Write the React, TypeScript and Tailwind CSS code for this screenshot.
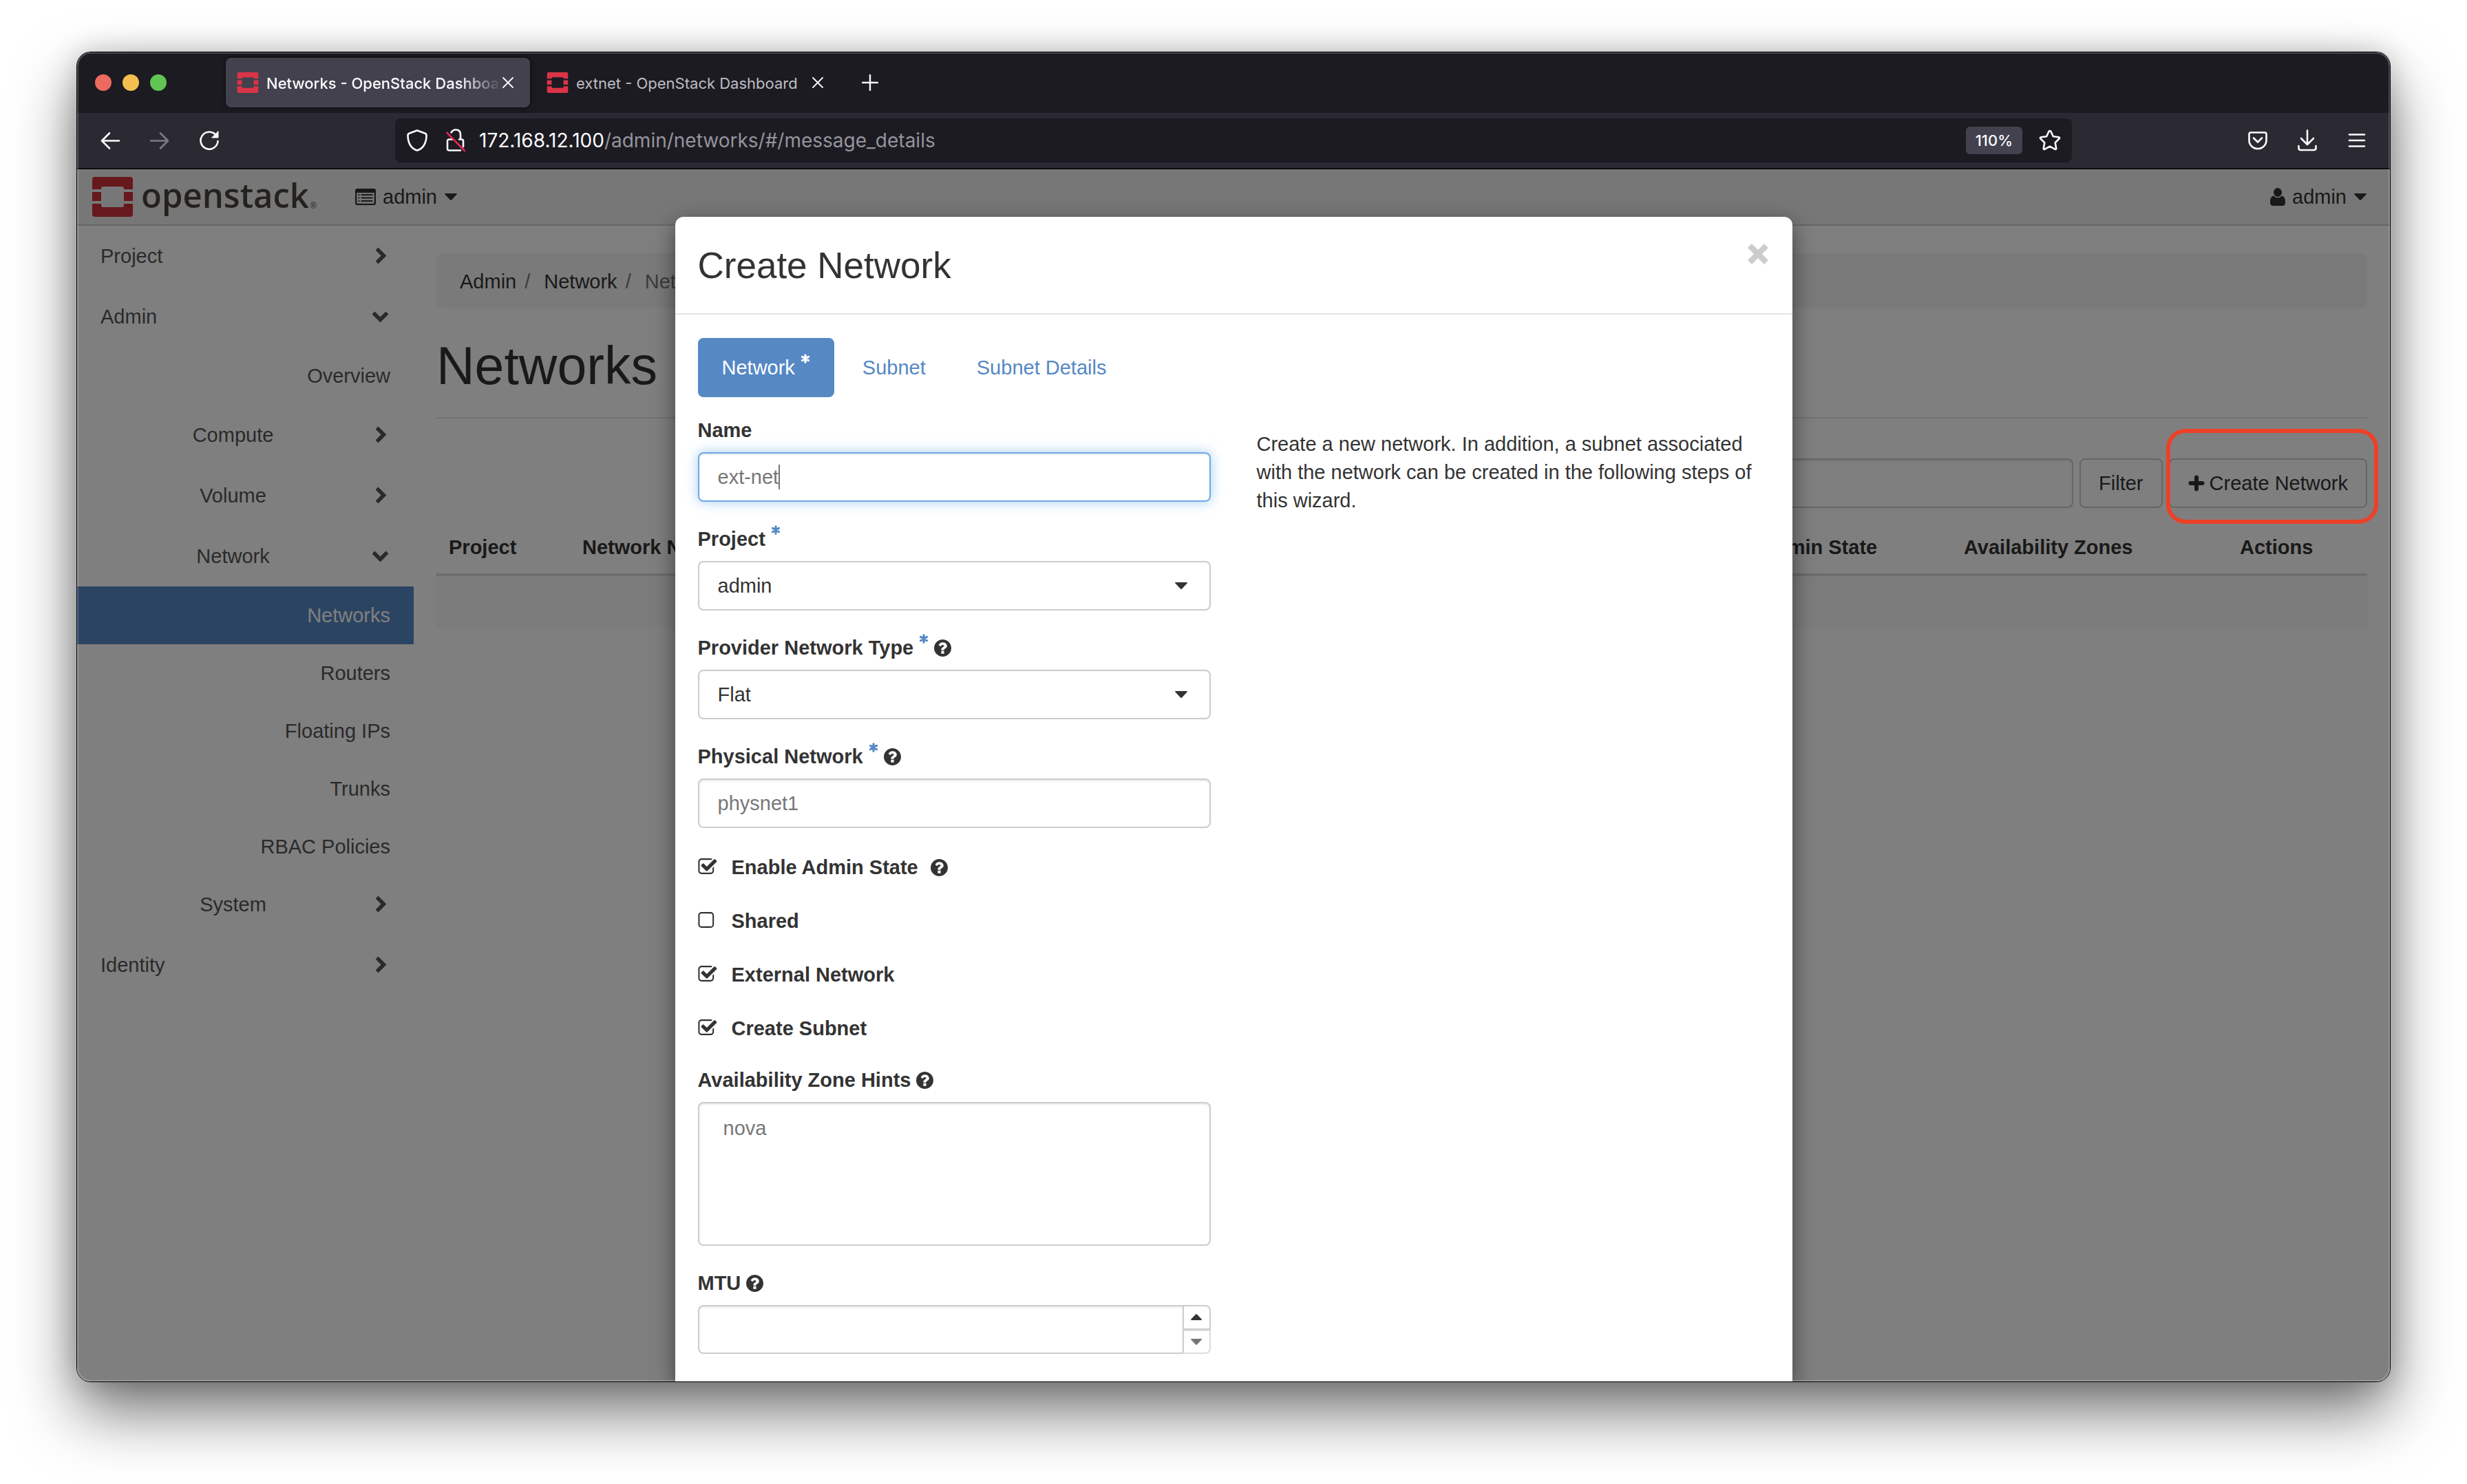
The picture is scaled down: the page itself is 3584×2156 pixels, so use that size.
import React from "react";

const questionPath =
  "M1024 1376v-192q0-14-9-23t-23-9h-192q-14 0-23 9t-9 23v192q0 14 9 23t23 9h192q14 0 23-9t9-23zm256-672q0-88-55.5-163t-138.5-116-170-41q-243 0-371 213-15 24 8 42l132 100q7 6 19 6 16 0 25-12 53-68 86-92 34-24 86-24 48 0 85.5 26t37.5 59q0 38-20 61t-68 45q-63 28-115.5 86.5t-52.5 125.5v36q0 14 9 23t23 9h192q14 0 23-9t9-23q0-19 21.5-49.5t54.5-49.5q32-18 49-28.5t46-35 44.5-48 28-60.5 12.5-81zm384 192q0 209-103 385.5t-279.5 279.5-385.5 103-385.5-103-279.5-279.5-103-385.5 103-385.5 279.5-279.5 385.5-103 385.5 103 279.5 279.5 103 385.5z";
const checkedPath =
  "M1472 930v318q0 119-84.5 203.5t-203.5 84.5h-832q-119 0-203.5-84.5t-84.5-203.5v-832q0-119 84.5-203.5t203.5-84.5h832q63 0 117 25 15 7 18 23 3 17-9 29l-49 49q-10 10-23 10-3 0-9-2-23-6-45-6h-832q-66 0-113 47t-47 113v832q0 66 47 113t113 47h832q66 0 113-47t47-113v-254q0-13 9-22l64-64q10-10 23-10 6 0 12 3 20 8 20 29zm231-489l-814 814q-24 24-57 24t-57-24l-430-430q-24-24-24-57t24-57l110-110q24-24 57-24t57 24l263 263 647-647q24-24 57-24t57 24l110 110q24 24 24 57t-24 57z";

function StackMark({ className }: { className: string }) {
  return (
    <svg viewBox="0 0 59 58" className={className} fill="currentColor" aria-hidden="true">
      <path d="M4 0h51q4 0 4 4v14H46v-1q0-3-3-3H16q-3 0-3 3v1H0V4q0-4 4-4z" />
      <path d="M0 22h13v13H0zM46 22h13v13H46z" />
      <path d="M0 39h13v2q0 3 3 3h27q3 0 3-3v-2h13v15q0 4-4 4H4q-4 0-4-4z" />
    </svg>
  );
}

function Caret({ className }: { className: string }) {
  return (
    <svg viewBox="0 0 18 10" className={className} fill="currentColor" aria-hidden="true">
      <path d="M1 0h16q1.500 0 .5 1.500L10 9.500q-1 .8-2 0L.5 1.500Q-.5 0 1 0z" />
    </svg>
  );
}

function Asterisk() {
  return (
    <svg viewBox="0 0 14 14" className="size-3.5 shrink-0 self-start" stroke="currentColor" strokeWidth="3.2" strokeLinecap="round" aria-hidden="true">
      <path d="M7 1.800v10.400M2.500 4.400l9 5.200M11.500 4.400l-9 5.200" />
    </svg>
  );
}

function Help() {
  return (
    <svg viewBox="128 128 1536 1536" className="size-[25px] shrink-0" fill="currentColor" role="img" aria-label="Help">
      <path d={questionPath} />
    </svg>
  );
}

function Chevron({ open }: { open: boolean }) {
  return (
    <svg viewBox="2 0 26 26" className="size-[26px] shrink-0" fill="none" stroke="currentColor" strokeWidth="5.500" strokeLinejoin="miter" aria-hidden="true">
      {open ? <path d="M3.500 7.500L13.500 17.500 23.500 7.500" /> : <path d="M8.500 2.500L18.500 12.500 8.500 22.500" />}
    </svg>
  );
}

function CloseIcon() {
  return (
    <svg viewBox="0 0 16 16" className="size-4" stroke="currentColor" strokeWidth="1.800" strokeLinecap="round" aria-hidden="true">
      <path d="M1 1l14 14M15 1L1 15" />
    </svg>
  );
}

function TabStrip() {
  return (
    <div className="flex h-[88px] items-center bg-[#1c1b22] pl-[26px] text-[22px] leading-8 text-[#fbfbfe]">
      <div className="flex gap-4">
        <span className="size-6 rounded-full bg-[#ed6a5e]" />
        <span className="size-6 rounded-full bg-[#f4bf4f]" />
        <span className="size-6 rounded-full bg-[#61c554]" />
      </div>
      <div className="ml-[86px] flex h-[72px] w-[442px] items-center rounded-lg bg-[#42414d] pr-6 pl-4 shadow-[0_0_8px_rgba(0,0,0,0.6)]">
        <StackMark className="h-[30px] w-8 shrink-0 text-[#da3447]" />
        <span className="ml-[11px] flex-1 overflow-hidden pt-0.5 font-medium whitespace-nowrap [mask-image:linear-gradient(to_right,black_82%,transparent)]">
          Networks - OpenStack Dashboard
        </span>
        <button type="button" aria-label="Close tab"><CloseIcon /></button>
      </div>
      <div className="ml-6 flex items-center text-[#bdbdc2]">
        <StackMark className="h-[30px] w-8 shrink-0 text-[#da3447]" />
        <span className="ml-[11px] w-[343px] pt-0.5 whitespace-nowrap">extnet - OpenStack Dashboard</span>
        <button type="button" aria-label="Close tab" className="text-[#fbfbfe]"><CloseIcon /></button>
      </div>
      <button type="button" aria-label="New tab" className="ml-14">
        <svg viewBox="0 0 24 24" className="size-6" stroke="currentColor" strokeWidth="2.400" strokeLinecap="round">
          <path d="M12 1v22M1 12h22" />
        </svg>
      </button>
    </div>
  );
}

function AddressBar() {
  return (
    <div className="flex h-[82px] items-center border-b-2 border-[#0c0c0d] bg-[#2b2a33] text-[#fbfbfe]">
      <div className="flex w-[462px] shrink-0 gap-11 pl-[34px]">
        <button type="button" aria-label="Back">
          <svg viewBox="0 0 28 28" className="size-7" fill="none" stroke="currentColor" strokeWidth="2.600" strokeLinecap="round" strokeLinejoin="round">
            <path d="M27 14.500H2M13 3.500L2 14.500l11 11" />
          </svg>
        </button>
        <button type="button" aria-label="Forward" className="text-[#7d7c84]">
          <svg viewBox="0 0 28 28" className="size-7" fill="none" stroke="currentColor" strokeWidth="2.600" strokeLinecap="round" strokeLinejoin="round">
            <path d="M1 14.500h25M15 3.500l11 11-11 11" />
          </svg>
        </button>
        <button type="button" aria-label="Reload">
          <svg viewBox="0 0 28 28" className="size-7" fill="none" stroke="currentColor" strokeWidth="2.600" strokeLinecap="round">
            <path d="M26.500 15A12.500 12.500 0 1 1 23 5.500" />
            <path d="M27 1v9h-9z" fill="currentColor" strokeWidth="1" strokeLinejoin="round" />
          </svg>
        </button>
      </div>
      <div className="flex h-16 flex-1 items-center rounded-lg bg-[#1c1b22] pr-4 pl-[17px]">
        <svg viewBox="0 0 30 32" className="h-8 w-[30px] shrink-0" fill="none" stroke="currentColor" strokeWidth="2.600" strokeLinejoin="round">
          <path d="M15 1.500l11.500 4.300q2 .8 2 3Q28.500 17 25 23q-4 6-10 7.500Q9 29 5 23 1.500 17 1.500 8.800q0-2.200 2-3z" />
        </svg>
        <svg viewBox="0 0 28 34" className="ml-[27px] h-[34px] w-7 shrink-0" fill="none" stroke="currentColor" strokeWidth="2.600" strokeLinecap="round">
          <path d="M7.500 5.500Q10 1.500 14 1.500q7 0 7 7V15M10 15.500H4.500q-2.500 0-2.500 2.500v11q0 2.500 2.500 2.500H21M19 15.500h3.500q2.500 0 2.500 2.500v8" />
          <path d="M1.500 6L27 32" stroke="#e22850" />
        </svg>
        <input
          aria-label="Address"
          readOnly
          value="172.168.12.100"
          className="ml-5 field-sizing-content bg-transparent text-[28px] outline-none"
        />
        <span className="text-[28px] text-[#95949c]">/admin/networks/#/message_details</span>
        <button type="button" className="ml-auto h-10 rounded-md bg-[#42414d] px-[14px] text-[22px] font-medium">110%</button>
        <button type="button" aria-label="Bookmark" className="ml-6">
          <svg viewBox="0 0 32 32" className="size-8" fill="none" stroke="currentColor" strokeWidth="2.600" strokeLinejoin="round">
            <path d="M16 2q1 0 1.500 1l3.300 7.200 8 1q2.200.5.700 2.300l-5.800 5.700 1.500 8.300q.2 2-1.600 1.300L16 24.700l-7.600 4.100q-1.800.7-1.600-1.300l1.500-8.300-5.800-5.700q-1.500-1.800.7-2.300l8-1L14.500 3q.5-1 1.500-1z" />
          </svg>
        </button>
      </div>
      <div className="flex w-[462px] shrink-0 items-center justify-end gap-11 pr-[34px]">
        <button type="button" aria-label="Save to Pocket">
          <svg viewBox="0 0 28 28" className="size-7" fill="none" stroke="currentColor" strokeWidth="2.600" strokeLinecap="round" strokeLinejoin="round">
            <path d="M4 2.500h20q2.500 0 2.500 2.500v9a12.500 12 0 0 1-25 0V5Q1.500 2.500 4 2.500z" />
            <path d="M8 10.500l6 6 6-6" />
          </svg>
        </button>
        <button type="button" aria-label="Downloads">
          <svg viewBox="0 0 28 32" className="h-8 w-7" fill="none" stroke="currentColor" strokeWidth="2.600" strokeLinecap="round" strokeLinejoin="round">
            <path d="M14 1.500v20M5 13l9 9 9-9M1.500 24v3q0 3 3 3h19q3 0 3-3v-3" />
          </svg>
        </button>
        <button type="button" aria-label="Menu">
          <svg viewBox="0 0 28 28" className="size-7" stroke="currentColor" strokeWidth="2.600" strokeLinecap="round">
            <path d="M3 5.500h22M3 14h22M3 22.500h22" />
          </svg>
        </button>
      </div>
    </div>
  );
}

function SiteHeader() {
  return (
    <header className="flex h-[82px] items-center border-b-2 border-[#ccc] bg-[#eee] pr-[34px] pl-[22px] text-[#333]">
      <a href="#home" className="flex w-[382px] items-center gap-3">
        <StackMark className="h-[58px] w-[59px] shrink-0 text-[#cf3038]" />
        <span className="flex items-end pb-1.5 text-[#4b443d]">
          <span className="font-[Open_Sans] text-[49px] leading-[64px] font-semibold">openstack</span>
          <span className="ml-0.5 pb-2 text-[12px] leading-4">®</span>
        </span>
      </a>
      <button type="button" className="flex items-center">
        <svg viewBox="0 0 30 24" className="h-6 w-[30px]" fill="currentColor" aria-hidden="true">
          <path fillRule="evenodd" d="M3 0h24q3 0 3 3v18q0 3-3 3H3q-3 0-3-3V3q0-3 3-3zM2.300 6v14.500q0 1.200 1.200 1.200h23q1.200 0 1.200-1.200V6z" />
          <path d="M4.500 8h2v2h-2zM4.500 12.500h2v2h-2zM4.500 17h2v2h-2zM8.500 8h17v2h-17zM8.500 12.500h17v2h-17zM8.500 17h17v2h-17z" />
        </svg>
        <span className="ml-2.5">admin</span>
        <Caret className="ml-[11px] h-2.5 w-[18px]" />
      </button>
      <button type="button" className="ml-auto flex items-center">
        <svg viewBox="0 0 22 26" className="h-[26px] w-[22px]" fill="currentColor" aria-hidden="true">
          <ellipse cx="11" cy="6.500" rx="6" ry="6.500" />
          <path d="M5 11.500q2.500 2.800 6 2.800t6-2.800q5 .8 5 9 0 5.500-4 5.500H4q-4 0-4-5.500 0-8.200 5-9z" />
        </svg>
        <span className="ml-2.5">admin</span>
        <Caret className="ml-[11px] h-2.5 w-[18px]" />
      </button>
    </header>
  );
}

function Branch({ label, open = false, nested = false }: { label: string; open?: boolean; nested?: boolean }) {
  return (
    <button
      type="button"
      aria-expanded={open}
      className={
        "flex h-[84px] w-full items-center gap-2.5 px-[34px] " +
        (open ? "mb-0.5 " : "mb-1 ") +
        (nested ? "text-center" : "text-left")
      }
    >
      <span className="flex-1">{label}</span>
      <Chevron open={open} />
    </button>
  );
}

function Leaf({ label, active = false }: { label: string; active?: boolean }) {
  return (
    <a
      href={"#" + label}
      className={"flex h-[84px] items-center justify-end px-[34px] " + (active ? "bg-[#5688c4] text-white" : "")}
    >
      {label}
    </a>
  );
}

function Sidebar() {
  return (
    <nav className="w-[489px] shrink-0 pt-0.5 text-[#555]">
      <Branch label="Project" />
      <Branch label="Admin" open />
      <div className="pb-0.5">
        <Leaf label="Overview" />
      </div>
      <Branch label="Compute" nested />
      <Branch label="Volume" nested />
      <Branch label="Network" open nested />
      <div>
        <Leaf label="Networks" active />
        <Leaf label="Routers" />
        <Leaf label="Floating IPs" />
        <Leaf label="Trunks" />
        <Leaf label="RBAC Policies" />
      </div>
      <Branch label="System" nested />
      <Branch label="Identity" />
    </nav>
  );
}

const columns = [
  { label: "Project", width: "w-[194px]" },
  { label: "Network Name", width: "w-[280px]" },
  { label: "Subnets Associated", width: "w-[320px]" },
  { label: "DHCP Agents", width: "" },
  { label: "Shared", width: "" },
  { label: "External", width: "" },
  { label: "Status", width: "" },
  { label: "Admin State", width: "w-[295px]" },
  { label: "Availability Zones", width: "w-[401px]" },
  { label: "Actions", width: "w-[203px]" },
];

function NetworksPage() {
  return (
    <main className="min-w-0 flex-1 pt-10 pr-[33px] pl-[33px] text-[#333]">
      <nav aria-label="Breadcrumb" className="flex h-20 items-center rounded-lg bg-[#f5f5f5] px-[34px] pt-0.5">
        <a href="#admin">Admin</a>
        <span className="mr-5 ml-3 text-[#777]">/</span>
        <a href="#network">Network</a>
        <span className="mr-5 ml-3 text-[#777]">/</span>
        <span className="text-[#777]">Networks</span>
      </nav>
      <h1 className="mt-10 border-b-2 border-[#e5e5e5] pb-8 text-[77px] leading-[86px]">Networks</h1>
      <div className="mt-[58px] flex justify-end gap-[9px]">
        <input aria-label="Filter networks" className="h-[72px] w-[1200px] rounded-lg border-2 border-[#ccc] bg-white px-7 shadow-[inset_0_2px_2px_rgba(0,0,0,0.08)]" />
        <button type="button" className="h-[72px] rounded-lg border-2 border-[#ccc] bg-white px-[26px]">Filter</button>
        <div className="relative">
          <button type="button" className="flex h-[72px] items-center gap-[7px] rounded-lg border-2 border-[#ccc] bg-white px-[26px]">
            <svg viewBox="0 0 24 24" className="size-6" stroke="currentColor" strokeWidth="6" strokeLinecap="round" aria-hidden="true">
              <path d="M12 3.500v17M3.500 12h17" />
            </svg>
            Create Network
          </button>
          <span className="absolute -inset-x-1 -top-[43px] -bottom-[23px] z-30 -mr-3 rounded-[28px] border-[6px] border-[#ec4127]" />
        </div>
      </div>
      <table className="mt-5 w-full table-fixed">
        <thead>
          <tr className="border-b-4 border-[#ddd]">
            {columns.map((c) => (
              <th key={c.label} scope="col" className={"h-[77px] overflow-hidden px-[18px] text-left font-bold whitespace-nowrap " + c.width}>
                {c.label}
              </th>
            ))}
          </tr>
        </thead>
        <tbody>
          <tr className="bg-[#f9f9f9]">
            <td colSpan={10} className="h-[77px]" />
          </tr>
        </tbody>
      </table>
    </main>
  );
}

function FieldLabel({ htmlFor, text, required = false, help = false }: { htmlFor: string; text: string; required?: boolean; help?: boolean }) {
  return (
    <label htmlFor={htmlFor} className="mb-[11px] flex h-[41px] items-center gap-2 font-bold">
      {text}
      {required && <span className="flex self-stretch text-[#5688c4]"><Asterisk /></span>}
      {help && <Help />}
    </label>
  );
}

function SelectField({ id, label, value, help = false }: { id: string; label: string; value: string; help?: boolean }) {
  return (
    <div>
      <FieldLabel htmlFor={id} text={label} required help={help} />
      <div className="grid items-center">
        <select id={id} defaultValue={value} className="col-start-1 row-start-1 h-[72px] w-full appearance-none rounded-lg border-2 border-[#ccc] bg-white px-[27px] outline-none">
          <option>{value}</option>
        </select>
        <Caret className="pointer-events-none col-start-1 row-start-1 mr-[34px] h-2.5 w-[18px] justify-self-end" />
      </div>
    </div>
  );
}

function CheckField({ label, checked = false, help = false }: { label: string; checked?: boolean; help?: boolean }) {
  return (
    <div className="flex h-[41px] items-center gap-[18px] font-bold">
      <label className="flex items-center gap-5">
        <span className="grid">
          <input type="checkbox" defaultChecked={checked} className="peer col-start-1 row-start-1 size-7 appearance-none" />
          <svg viewBox="40 60 1792 1792" className="pointer-events-none col-start-1 row-start-1 hidden size-[29px] peer-checked:block" fill="currentColor" aria-hidden="true">
            <path d={checkedPath} />
          </svg>
          <svg viewBox="40 60 1792 1792" className="pointer-events-none col-start-1 row-start-1 size-[29px] peer-checked:hidden" fill="none" stroke="currentColor" strokeWidth="128" aria-hidden="true">
            <rect x="128" y="192" width="1280" height="1280" rx="224" />
          </svg>
        </span>
        {label}
      </label>
      {help && <Help />}
    </div>
  );
}

function CreateNetworkDialog() {
  return (
    <section
      role="dialog"
      aria-label="Create Network"
      className="z-20 col-start-1 row-start-1 mt-[69px] w-[1623px] max-w-full justify-self-center rounded-t-xl bg-white text-[#333] shadow-[0_11px_33px_rgba(0,0,0,0.5)]"
    >
      <div className="flex h-[142px] items-start justify-between border-b-2 border-[#e5e5e5] pt-[39px] pr-[35px] pl-[33px]">
        <h2 className="text-[53px] leading-[64px]">Create Network</h2>
        <button type="button" aria-label="Close" className="text-[#ccc]">
          <svg viewBox="0 0 30 30" className="size-[30px]" stroke="currentColor" strokeWidth="8.500" strokeLinecap="butt" aria-hidden="true">
            <path d="M3 3l24 24M27 3L3 27" />
          </svg>
        </button>
      </div>
      <div className="px-[33px] pt-[34px] pb-10">
        <div role="tablist" className="flex gap-2 text-[#5688c4]">
          <button type="button" role="tab" aria-selected="true" className="flex h-[86px] items-center rounded-lg bg-[#5688c4] px-[35px] text-white">
            <span className="flex gap-2">Network<Asterisk /></span>
          </button>
          <button type="button" role="tab" aria-selected="false" className="h-[86px] px-[33px]">Subnet</button>
          <button type="button" role="tab" aria-selected="false" className="h-[86px] px-[33px]">Subnet Details</button>
        </div>
        <div className="mt-7 grid grid-cols-2 gap-[67px]">
          <form className="flex flex-col gap-[34px]">
            <div>
              <FieldLabel htmlFor="name" text="Name" />
              <div className="flex h-[72px] items-center rounded-lg border-2 border-[#6fa8e6] px-[27px] shadow-[inset_0_2px_2px_rgba(0,0,0,0.08),0_0_18px_rgba(102,175,233,0.6)]">
                <input id="name" defaultValue="ext-net" className="field-sizing-content bg-transparent text-[#777] outline-none" />
                <span className="h-9 w-0.5 bg-[#777]" />
              </div>
            </div>
            <SelectField id="project" label="Project" value="admin" />
            <SelectField id="type" label="Provider Network Type" value="Flat" help />
            <div>
              <FieldLabel htmlFor="physical" text="Physical Network" required help />
              <input id="physical" defaultValue="physnet1" className="h-[72px] w-full rounded-lg border-2 border-[#ccc] px-[27px] text-[#777] shadow-[inset_0_2px_2px_rgba(0,0,0,0.08)] outline-none" />
            </div>
            <div className="flex flex-col gap-[37px] pt-[3px]">
              <CheckField label="Enable Admin State" checked help />
              <CheckField label="Shared" />
              <CheckField label="External Network" checked />
              <CheckField label="Create Subnet" checked />
            </div>
            <div>
              <FieldLabel htmlFor="zones" text="Availability Zone Hints" help />
              <select id="zones" multiple size={4} className="block h-[209px] w-full rounded-lg border-2 border-[#ccc] px-[27px] py-5 text-[#777] shadow-[inset_0_2px_2px_rgba(0,0,0,0.08)] outline-none">
                <option className="px-2">nova</option>
              </select>
            </div>
            <div>
              <FieldLabel htmlFor="mtu" text="MTU" help />
              <div className="flex h-[71px]">
                <input id="mtu" inputMode="numeric" className="min-w-0 flex-1 rounded-l-lg border-2 border-r-0 border-[#ccc] px-[27px] shadow-[inset_0_2px_2px_rgba(0,0,0,0.08)] outline-none" />
                <div className="grid w-[41px] grid-rows-2">
                  <button type="button" aria-label="Increase MTU" className="grid place-items-center rounded-tr-lg border-2 border-[#ccc]">
                    <Caret className="h-[9px] w-4 rotate-180" />
                  </button>
                  <button type="button" aria-label="Decrease MTU" className="grid place-items-center rounded-br-lg border-2 border-[#ddd] border-l-[#ccc] text-[#777]">
                    <Caret className="h-[9px] w-4" />
                  </button>
                </div>
              </div>
            </div>
          </form>
          <p className="pt-5">
            Create a new network. In addition, a subnet associated with the network can be created in the following steps of this wizard.
          </p>
        </div>
      </div>
    </section>
  );
}

export default function App() {
  return (
    <div className="min-h-screen bg-white px-28 pt-[76px] pb-[148px]">
      <div className="relative overflow-hidden rounded-[20px] font-[Inter,sans-serif] shadow-[0_0_0_1px_#000,0_0_40px_rgba(0,0,0,0.2),0_44px_90px_rgba(0,0,0,0.55)]">
        <TabStrip />
        <AddressBar />
        <div className="grid font-['Liberation_Sans',sans-serif] text-[29px] leading-[41px]">
          <div className="col-start-1 row-start-1 flex flex-col bg-white">
            <SiteHeader />
            <div className="flex flex-1">
              <Sidebar />
              <NetworksPage />
            </div>
          </div>
          <div className="z-10 col-start-1 row-start-1 bg-black/50" />
          <CreateNetworkDialog />
        </div>
        <div className="pointer-events-none absolute inset-0 z-40 rounded-[20px] shadow-[inset_0_0_0_2px_rgba(255,255,255,0.2)]" />
      </div>
    </div>
  );
}
